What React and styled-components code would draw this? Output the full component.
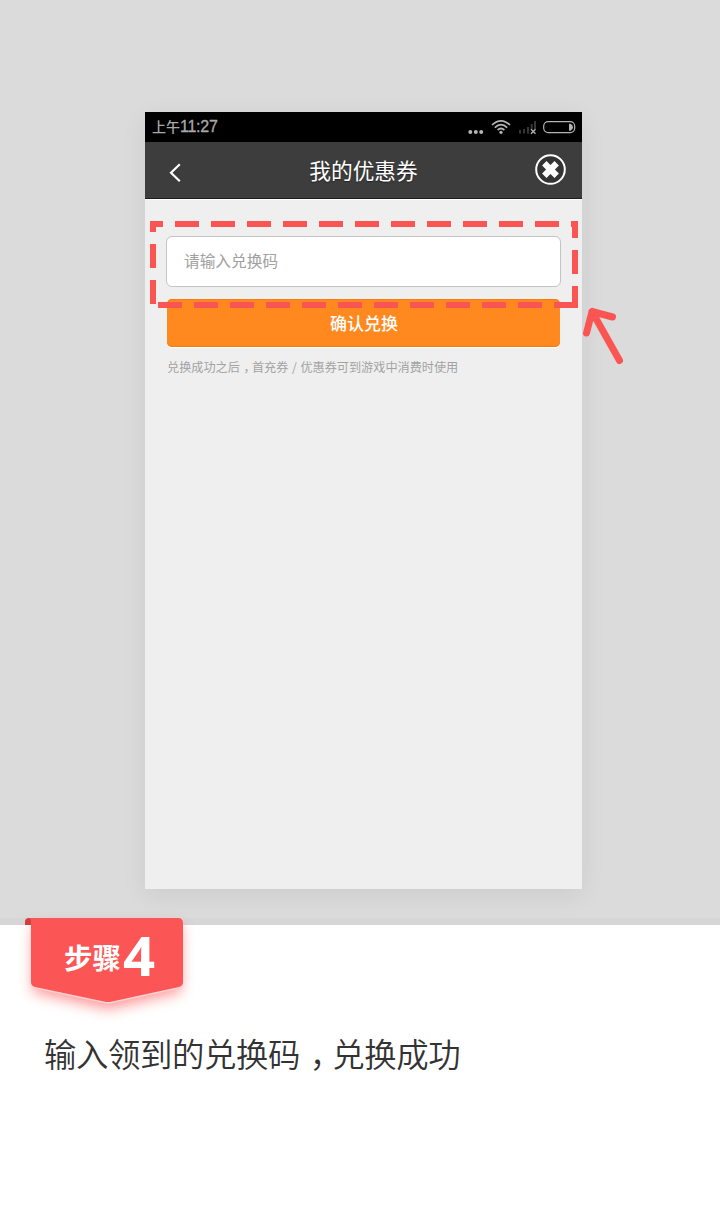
import React from "react";
import styled, { createGlobalStyle } from "styled-components";

const Global = createGlobalStyle`
  * { box-sizing: border-box; }
  body {
    margin: 0;
    background: #fff;
    font-family: "Noto Sans CJK SC", "Noto Sans", sans-serif;
  }
`;

const Page = styled.main`
  width: 720px;
  height: 1220px;
  overflow: hidden;
  background: #fff;
`;

const Stage = styled.section`
  height: 925px;
  padding: 112px 0 0 145px;
  background: #dbdbdb;
  border-bottom: 7px solid #d6d6d6;
`;

const Phone = styled.div`
  position: relative;
  width: 437px;
  height: 777px;
  background: #efefef;
  box-shadow: 0 6px 24px rgba(0, 0, 0, 0.07);
`;

const StatusBar = styled.div`
  display: flex;
  align-items: center;
  justify-content: space-between;
  height: 30px;
  padding: 0 6px 0 7px;
  background: #000;
  color: #a9a9a9;
`;

const Clock = styled.span`
  padding-bottom: 1px;
  font: 500 14px/28px "Noto Sans CJK SC", sans-serif;
`;

const Digits = styled.span`
  font-family: "Liberation Sans", sans-serif;
  font-weight: 400;
  font-size: 16px;
  letter-spacing: -0.25px;
  -webkit-text-stroke: 0.3px #a9a9a9;
`;

const NavBar = styled.header`
  display: grid;
  grid-template-columns: 60px 1fr 60px;
  align-items: center;
  height: 57px;
  background: #3d3d3d;
  border-bottom: 1px solid #1d1d1d;
  box-shadow: 0 1px 0 #fff;
`;

const NavTitle = styled.h1`
  margin: 0;
  padding-bottom: 1px;
  text-align: center;
  font-size: 21.7px;
  line-height: 56px;
  font-weight: 400;
  color: #fff;
  text-shadow: 0 1px 1px #222;
`;

const Form = styled.div`
  display: flex;
  flex-direction: column;
  padding: 37px 21px 0;
`;

const CodeField = styled.div`
  width: 395px;
  height: 51px;
  padding-left: 17px;
  border: 1px solid #c4c4c4;
  border-radius: 6px;
  background: #fff;
  color: #a0a0a0;
  font-size: 15.7px;
  line-height: 47px;
`;

const Confirm = styled.button`
  width: 393px;
  height: 48px;
  margin: 12px 0 0 1px;
  padding: 0 0 0 1px;
  border: 0;
  border-radius: 5px;
  background: #ff891f;
  box-shadow: inset 0 -1px 0 #f57d12, inset 0 1px 0 #f57d12, 0 1px 0 #fff;
  color: #fff;
  font-family: inherit;
  font-size: 17px;
  font-weight: 500;
  line-height: 48px;
`;

const Hint = styled.p`
  margin: 11px 0 0 1px;
  color: #a3a3a3;
  font-size: 12.15px;
  line-height: 18px;
  white-space: nowrap;
`;

const Slash = styled.span`
  display: inline-block;
  width: 12px;
  text-align: center;
`;

const Comma = styled.span`
  display: inline-block;
  width: 1em;
  padding-left: 0.3em;
  font-feature-settings: "halt";
`;

const Annotation = styled.svg`
  position: absolute;
  left: 0;
  top: 100px;
  overflow: visible;
  pointer-events: none;
`;

const StepBadge = styled.div`
  position: relative;
  width: 168px;
  height: 100px;
  margin: -7px 0 0 25px;
`;

const BadgeShape = styled.svg`
  display: block;
  overflow: visible;
`;

const BadgeLabel = styled.div`
  position: absolute;
  left: 39px;
  top: -2px;
  display: flex;
  align-items: center;
  height: 80px;
  color: #fff;
  font-size: 28.5px;
  font-weight: 700;
`;

const StepNumber = styled.span`
  margin-left: 2px;
  font-family: "Noto Sans", "Open Sans", sans-serif;
  font-size: 53px;
  line-height: 80px;
  transform: scaleX(1.06);
  transform-origin: left center;
`;

const Caption = styled.p`
  margin: 11px 0 0 44px;
  color: #333;
  font-size: 32.4px;
  letter-spacing: -0.4px;
  font-weight: 350;
  line-height: 48px;
  white-space: nowrap;
`;

function StatusIcons() {
  return (
    <svg width="109" height="30" viewBox="467 112 109 30" fill="none" stroke="#b4b4b4">
      <g fill="#b4b4b4" stroke="none">
        <circle cx="470.3" cy="132" r="2" />
        <circle cx="475.8" cy="132" r="2" />
        <circle cx="481.2" cy="132" r="2" />
        <circle cx="501" cy="132.300" r="1.600" />
      </g>
      <g strokeWidth="1.7">
        <path d="M492 125Q501 116.600 510 125" />
        <path d="M494.800 127.600Q501 121.800 507.200 127.600" />
        <path d="M497.600 130Q501 127 504.400 130" />
      </g>
      <g stroke="#363636" strokeWidth="2">
        <path d="M520 130v3.500M524 129v4.500M528 127v6.500M531.700 124v5M535 121v8" />
      </g>
      <path d="M531 129.300l4.500 4.500M535.500 129.300l-4.500 4.500" strokeWidth="1.400" />
      <rect x="543.700" y="121.600" width="31" height="11" rx="4.500" strokeWidth="1.200" />
      <path d="M569 123.700h1.500q2.500 1 2.500 3.500t-2.500 3.500H569z" fill="#b4b4b4" stroke="none" />
    </svg>
  );
}

function BackIcon() {
  return (
    <svg width="60" height="56" viewBox="145 142 60 56" fill="none">
      <path d="M179.800 163.300l-8.800 8.500 8.800 8.500" stroke="#fff" strokeWidth="2.200" />
    </svg>
  );
}

function CloseIcon() {
  return (
    <svg width="60" height="56" viewBox="522 142 60 56" fill="none">
      <circle cx="550.500" cy="168.500" r="14.300" fill="#343434" stroke="#fff" strokeWidth="2" />
      <path d="M544.300 162.300l12.400 12.400M556.700 162.300l-12.400 12.400" stroke="#fff" strokeWidth="6.200" />
    </svg>
  );
}

function Highlight() {
  return (
    <Annotation width="437" height="160" viewBox="145 212 437 160" fill="none" stroke="#fb5553" strokeWidth="6">
      <path d="M150 224h13M571 224h7" />
      <path d="M175 224H559" strokeDasharray="24 12" />
      <path d="M158 305H578" strokeDasharray="24 12" />
      <path d="M153 221v11M153 244v24M153 280v24" />
      <path d="M575 221v17M575 250v24M575 286v22" />
      <path
        d="M619.500 360.500L592 311.500M586.500 333L592 311.500L612.500 317"
        strokeWidth="7"
        strokeLinecap="round"
        strokeLinejoin="round"
      />
    </Annotation>
  );
}

function Ribbon() {
  return (
    <BadgeShape width="168" height="100" viewBox="25 918 168 100">
      <defs>
        <filter id="glow" x="-30%" y="-30%" width="160%" height="170%">
          <feGaussianBlur stdDeviation="7" />
        </filter>
      </defs>
      <path
        d="M33 926H181V992L108 1009L33 992Z"
        fill="#ff5050"
        opacity="0.6"
        filter="url(#glow)"
      />
      <path d="M25 925v-3q0-4 4-4h4v7z" fill="#cf3f3f" />
      <path
        d="M31 919H183V983.500Q183 987.500 179 988.500L112 1003Q108 1004 104 1003L35 988.500Q31 987.500 31 983.500Z"
        fill="#ffd3d3"
      />
      <path
        d="M29 918H178Q183 918 183 923V982Q183 986 179 987L112 1001.500Q108 1002.500 104 1001.500L35 987Q31 986 31 982V922Q31 918 29 918Z"
        fill="#fb5555"
      />
    </BadgeShape>
  );
}

export default function App() {
  return (
    <Page>
      <Global />
      <Stage>
        <Phone>
          <StatusBar>
            <Clock>上午<Digits>11:27</Digits></Clock>
            <StatusIcons />
          </StatusBar>
          <NavBar>
            <BackIcon />
            <NavTitle>我的优惠券</NavTitle>
            <CloseIcon />
          </NavBar>
          <Form>
            <CodeField>请输入兑换码</CodeField>
            <Confirm>确认兑换</Confirm>
            <Hint>
              兑换成功之后<Comma>，</Comma>首充券<Slash>/</Slash>优惠券可到游戏中消费时使用
            </Hint>
          </Form>
          <Highlight />
        </Phone>
      </Stage>
      <StepBadge>
        <Ribbon />
        <BadgeLabel>
          步骤<StepNumber>4</StepNumber>
        </BadgeLabel>
      </StepBadge>
      <Caption>
        输入领到的兑换码<Comma>，</Comma>兑换成功
      </Caption>
    </Page>
  );
}
